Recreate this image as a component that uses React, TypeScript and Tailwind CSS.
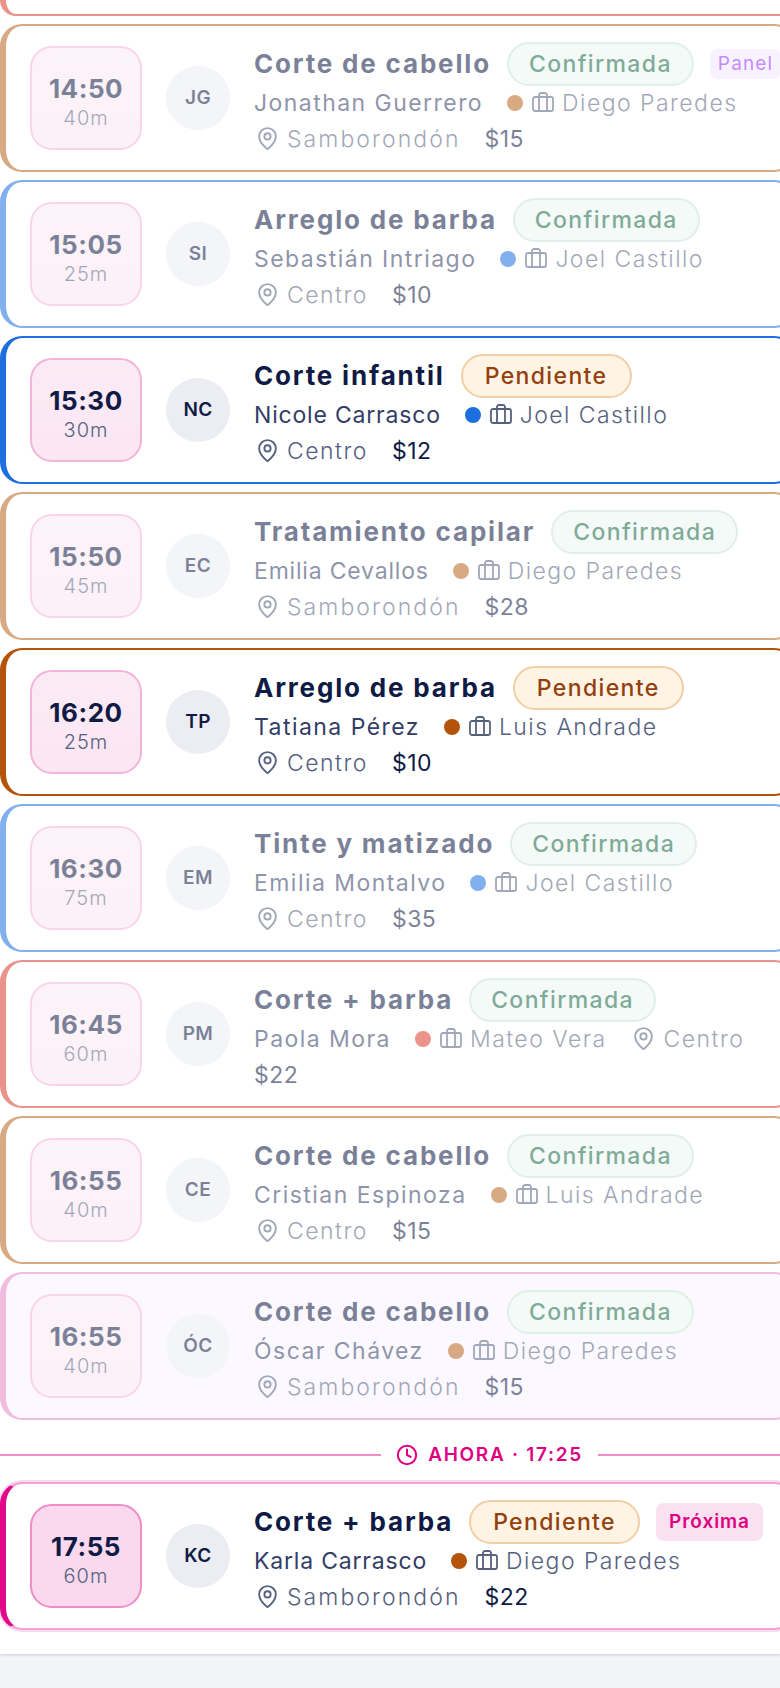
import { Briefcase, Clock, MapPin } from "lucide-react";

type Appt = {
  time: string; dur: string; ini: string; title: string; status: "c" | "p";
  client: string; staff: string; dot: string; border: string; place: string; price: string;
  extra?: "panel" | "next"; tint?: boolean; tight?: boolean;
};

const rows: Appt[] = [
  { time: "14:50", dur: "40m", ini: "JG", title: "Corte de cabello", status: "c", client: "Jonathan Guerrero", staff: "Diego Paredes", dot: "bg-[#b7651f]", border: "border-[#b7651f]", place: "Samborondón", price: "$15", extra: "panel" },
  { time: "15:05", dur: "25m", ini: "SI", title: "Arreglo de barba", status: "c", client: "Sebastián Intriago", staff: "Joel Castillo", dot: "bg-[#1d6fe0]", border: "border-[#1d6fe0]", place: "Centro", price: "$10" },
  { time: "15:30", dur: "30m", ini: "NC", title: "Corte infantil", status: "p", client: "Nicole Carrasco", staff: "Joel Castillo", dot: "bg-[#1d6fe0]", border: "border-[#1d6fe0]", place: "Centro", price: "$12", tight: true },
  { time: "15:50", dur: "45m", ini: "EC", title: "Tratamiento capilar", status: "c", client: "Emilia Cevallos", staff: "Diego Paredes", dot: "bg-[#b7651f]", border: "border-[#b7651f]", place: "Samborondón", price: "$28", tight: true },
  { time: "16:20", dur: "25m", ini: "TP", title: "Arreglo de barba", status: "p", client: "Tatiana Pérez", staff: "Luis Andrade", dot: "bg-[#b3540a]", border: "border-[#b3540a]", place: "Centro", price: "$10" },
  { time: "16:30", dur: "75m", ini: "EM", title: "Tinte y matizado", status: "c", client: "Emilia Montalvo", staff: "Joel Castillo", dot: "bg-[#1d6fe0]", border: "border-[#1d6fe0]", place: "Centro", price: "$35" },
  { time: "16:45", dur: "60m", ini: "PM", title: "Corte + barba", status: "c", client: "Paola Mora", staff: "Mateo Vera", dot: "bg-[#dc3a2e]", border: "border-[#dc3a2e]", place: "Centro", price: "$22" },
  { time: "16:55", dur: "40m", ini: "CE", title: "Corte de cabello", status: "c", client: "Cristian Espinoza", staff: "Luis Andrade", dot: "bg-[#b7651f]", border: "border-[#b7651f]", place: "Centro", price: "$15" },
  { time: "16:55", dur: "40m", ini: "ÓC", title: "Corte de cabello", status: "c", client: "Óscar Chávez", staff: "Diego Paredes", dot: "bg-[#b7651f]", border: "border-[#e887c4]", place: "Samborondón", price: "$15", tint: true },
];

function Pill({ status }: { status: "c" | "p" }) {
  return status === "c" ? (
    <span className="h-[44px] shrink-0 rounded-full border-2 border-[#c8e4d8] bg-[#ebf6f1] px-[20px] text-[23px] leading-[40px] font-[450] tracking-[0.06em] text-[#166544]">
      Confirmada
    </span>
  ) : (
    <span className="h-[44px] shrink-0 rounded-full border-2 border-[#f0cfa6] bg-[#fff3e4] px-[22px] text-[23px] leading-[40px] font-[450] tracking-[0.06em] text-[#92400e]">
      Pendiente
    </span>
  );
}

function Card({ a, next }: { a: Appt; next?: boolean }) {
  const faded = a.status === "c";
  return (
    <div
      className={`flex h-[148px] w-[796px] shrink-0 items-center rounded-[22px] border-2 border-l-[6px] pl-[24px] ${a.border} ${a.tint ? "bg-[#f9f5ff]" : "bg-white"} ${faded ? "opacity-55" : ""} ${next ? "border-[#f0a4d6] border-l-[#e0098a] shadow-[0_0_0_2px_#fbd9ee]" : ""}`}
    >
      <div
        className={`flex h-[104px] w-[112px] shrink-0 flex-col items-center justify-center rounded-[22px] border-2 pt-[10px] ${next ? "border-[#f08cc6] bg-[#fad9ee]" : "border-[#f4b3da] bg-gradient-to-b from-[#fbebf5] to-[#fbe6f3]"}`}
      >
        <div className="text-[26px] leading-[30px] font-bold tracking-[0.02em] text-[#0f1a45]">{a.time}</div>
        <div className="text-[20px] leading-[28px] font-light tracking-[0.05em] text-[#56617f]">{a.dur}</div>
      </div>
      <div className="ml-[24px] flex h-[64px] w-[64px] shrink-0 items-center justify-center rounded-full bg-[#ebedf3] pt-px text-[19px] font-semibold tracking-[0.02em] text-[#0f1a45]">
        {a.ini}
      </div>
      <div className="ml-[24px] min-w-0 flex-1 pb-[2px]">
        <div className="flex items-center gap-[16px]">
          <span className="shrink-0 text-[26px] leading-[44px] font-bold tracking-[0.07em] text-[#0f1a45]">{a.title}</span>
          <Pill status={a.status} />
          {a.extra === "panel" && (
            <span className="h-[30px] shrink-0 rounded-[8px] bg-[#f3e8ff] px-[8px] text-[19px] leading-[30px] font-normal tracking-[0.06em] text-[#942eff]">
              Panel
            </span>
          )}
          {a.extra === "next" && (
            <span className="h-[38px] shrink-0 rounded-[8px] bg-[#fae1f1] px-[13px] text-[19px] leading-[38px] font-semibold tracking-[0.05em] text-[#e0007f]">
              Próxima
            </span>
          )}
        </div>
        <div className="mt-[3px] flex flex-wrap items-center gap-x-[24px] gap-y-[8px] text-[23px] leading-[28px] tracking-[0.063em]">
          <span className={`font-normal text-[#333d66] ${a.tight ? "tracking-[0.035em]" : ""}`}>{a.client}</span>
          <span className="flex items-center font-[350] text-[#56617f]">
            <span className={`h-[16px] w-[16px] rounded-full ${a.dot}`} />
            <Briefcase className="mr-[7px] ml-[8px] h-[24px] w-[24px]" strokeWidth={1.8} />
            {a.staff}
          </span>
          <span className={`flex items-center font-[350] text-[#56617f] ${a.place === "Centro" ? "tracking-[0.065em]" : "tracking-[0.09em]"}`}>
            <MapPin className="mr-[7px] ml-[1px] h-[25px] w-[25px]" strokeWidth={1.8} />
            {a.place}
          </span>
          <span className="font-normal tracking-[0.02em] text-[#0f1a45]">{a.price}</span>
        </div>
      </div>
    </div>
  );
}

export default function App() {
  return (
    <div className="h-[1688px] w-[780px] overflow-hidden bg-[#f3f4f8] font-['Inter',sans-serif]">
      <div className="h-[1654px] overflow-hidden bg-white shadow-[0_1px_3px_rgba(15,26,69,0.18)]">
        <div className="h-[16px] w-[796px] rounded-bl-[22px] border-b-2 border-l-[6px] border-[#dc3a2e] opacity-55" />
        <div className="mt-[8px] flex flex-col gap-[8px]">
          {rows.map((a, i) => (
            <Card key={i} a={a} />
          ))}
        </div>
        <div className="mt-[21px] mb-[13px] flex h-[28px] items-center">
          <div className="h-[2px] flex-1 bg-[#f08cc6]" />
          <div className="mx-[15px] flex items-center text-[#e0007f]">
            <Clock className="mr-[10px] h-[22px] w-[22px]" strokeWidth={2.2} />
            <span className="text-[19px] font-semibold tracking-[0.09em]">AHORA · 17:25</span>
          </div>
          <div className="h-[2px] w-[182px] bg-[#f08cc6]" />
        </div>
        <Card
          next
          a={{ time: "17:55", dur: "60m", ini: "KC", title: "Corte + barba", status: "p", client: "Karla Carrasco", staff: "Diego Paredes", dot: "bg-[#b3540a]", border: "", place: "Samborondón", price: "$22", extra: "next", tight: true }}
        />
      </div>
    </div>
  );
}
